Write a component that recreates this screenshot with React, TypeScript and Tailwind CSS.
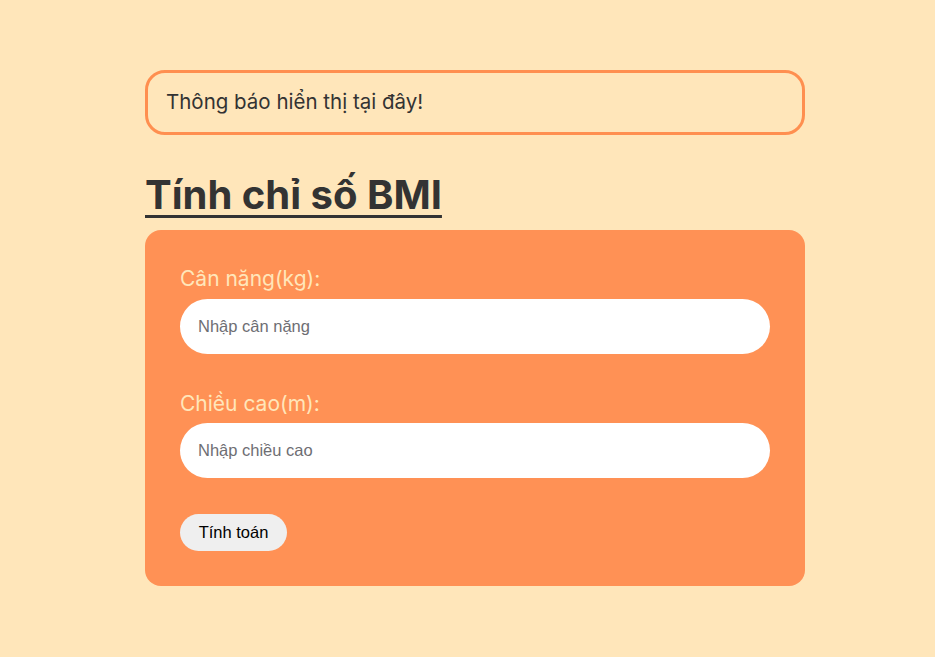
import React from "react"

export default function App(): JSX.Element {
    const [weight, setWeight] = React.useState("")
    const [height, setHeight] = React.useState("")

    return (
        <div className="min-h-screen bg-[#ffe6ba] pt-[70px] font-['Inter','Noto_Sans',sans-serif] text-[#333333]">
            <div className="ml-[145px] w-[660px]">
                <div className="flex h-[65px] items-center rounded-[20px] border-[3px] border-[#ff8f50] px-[18px] text-[20.5px]">
                    Thông báo hiển thị tại đây!
                </div>

                <h1 className="mt-[36px] mb-[11px] text-[40px] leading-[48px] font-bold underline decoration-[3px] underline-offset-[6px]">
                    Tính chỉ số BMI
                </h1>

                <div className="rounded-[16px] bg-[#ff9155] p-[35px]">
                    <label className="mb-[7px] block text-[21px] leading-[27px] text-[#ffe6ba]">Cân nặng(kg):</label>
                    <input
                        value={weight}
                        onChange={(e) => setWeight(e.target.value)}
                        placeholder="Nhập cân nặng"
                        className="block h-[55px] w-full rounded-full bg-white px-[18px] font-['Liberation_Sans',Arial,sans-serif] text-[16.5px] text-black outline-none placeholder:text-[#6e6e73]"
                    />

                    <label className="mt-[36px] mb-[6px] block text-[21px] leading-[27px] text-[#ffe6ba]">Chiều cao(m):</label>
                    <input
                        value={height}
                        onChange={(e) => setHeight(e.target.value)}
                        placeholder="Nhập chiều cao"
                        className="block h-[55px] w-full rounded-full bg-white px-[18px] font-['Liberation_Sans',Arial,sans-serif] text-[16.5px] text-black outline-none placeholder:text-[#6e6e73]"
                    />

                    <button className="mt-[36px] h-[37px] w-[107px] rounded-full bg-[#efefef] font-['Liberation_Sans',Arial,sans-serif] text-[16.5px] text-black">
                        Tính toán
                    </button>
                </div>
            </div>
        </div>
    )
}
